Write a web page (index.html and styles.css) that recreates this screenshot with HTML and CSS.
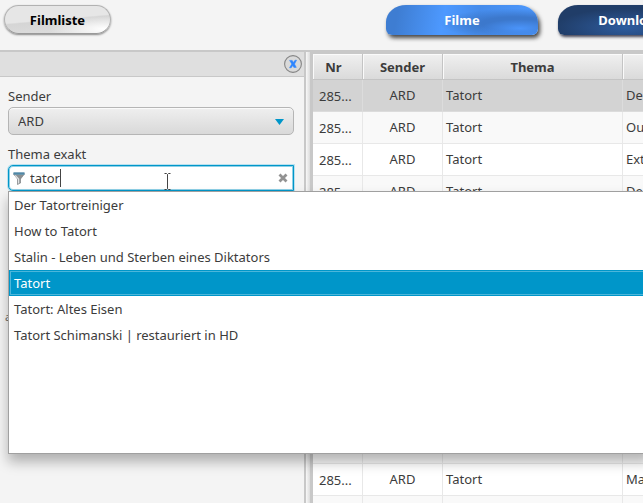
FILE: index.html
```html
<!DOCTYPE html>
<html lang="de">
<head>
<meta charset="utf-8">
<title>Filmliste</title>
<link rel="stylesheet" href="styles.css">
</head>
<body>
<div class="app">
  <header class="toolbar">
    <button class="list-button" type="button">Filmliste</button>
    <nav class="tabs">
      <button class="tab tab-active" type="button">Filme</button>
      <button class="tab tab-dark" type="button">Downloads</button>
    </nav>
  </header>
  <main class="workspace">
    <aside class="sidebar">
      <div class="sidebar-bar">
        <button class="close" type="button" aria-label="Filter schließen">
          <svg width="18" height="18" viewBox="0 0 18 18" aria-hidden="true">
            <circle cx="9" cy="9" r="8.4" fill="#dadada" stroke="#858585" stroke-width="1.1"/>
            <path d="M5.6 5.4H8.2L9.3 7.6L11 5.2H12.6L10.5 9L12.3 12.4H9.9L8.8 10.4L7.2 12.8H5.5L7.8 9Z" fill="#2d85ff" stroke="#2d85ff" stroke-width=".5"/>
          </svg>
        </button>
      </div>
      <form class="filters">
        <label for="sender">Sender</label>
        <div class="select-box">
          <select id="sender"><option>ARD</option></select>
          <svg class="arrow" width="9" height="6" viewBox="0 0 9 6" aria-hidden="true"><path d="M0 0H9L4.5 6Z" fill="#0096c9"/></svg>
        </div>
        <label for="thema">Thema exakt</label>
        <div class="search-box">
          <input id="thema" type="text" value="tator" autocomplete="off">
          <svg class="funnel" width="12" height="13" viewBox="0 0 12 13" aria-hidden="true">
            <path d="M.5 2L4.5 7V12.5L7.5 11V7L11.5 2Z" fill="#8b8f91" stroke="#74787b" stroke-width=".6"/>
            <path d="M2.2 3.4L5.6 7V11.4" fill="none" stroke="#dfe1e2" stroke-width="1.3"/>
            <path d="M.3 .5H11.7V2L10.8 3H1.2L.3 2Z" fill="#6a95ab"/>
            <path d="M.8 1.1H11.2" stroke="#3f7fa3"/>
          </svg>
          <svg class="caret" width="1" height="18" viewBox="0 0 1 18" aria-hidden="true"><path d="M.5 0V18" stroke="#444"/></svg>
          <svg class="pointer" width="9" height="20" viewBox="0 0 9 20" aria-hidden="true">
            <path d="M1.5 1.5H3.5L4.5 2.5L5.5 1.5H7.5M4.5 2.5V16.5M1.5 17.5H3.5L4.5 16.5L5.5 17.5H7.5" fill="none" stroke="#444"/>
          </svg>
          <button class="clear" type="button" aria-label="Löschen">
            <svg width="10" height="10" viewBox="0 0 10 10" aria-hidden="true"><path d="M1.5 1.5L8.5 8.5M8.5 1.5L1.5 8.5" stroke="#929292" stroke-width="2.8"/></svg>
          </button>
          <ul class="suggestions">
            <li>Der Tatortreiniger</li>
            <li>How to Tatort</li>
            <li>Stalin - Leben und Sterben eines Diktators</li>
            <li class="chosen">Tatort</li>
            <li>Tatort: Altes Eisen</li>
            <li>Tatort Schimanski | restauriert in HD</li>
          </ul>
        </div>
        <span class="range">a</span>
      </form>
    </aside>
    <div class="divider"></div>
    <section class="results">
      <table>
        <colgroup><col class="col-nr"><col class="col-sender"><col class="col-thema"><col></colgroup>
        <thead><tr><th>Nr</th><th>Sender</th><th>Thema</th><th></th></tr></thead>
        <tbody>
          <tr class="selected"><td>285...</td><td>ARD</td><td>Tatort</td><td>De</td></tr>
          <tr><td>285...</td><td>ARD</td><td>Tatort</td><td>Ou</td></tr>
          <tr><td>285...</td><td>ARD</td><td>Tatort</td><td>Ext</td></tr>
          <tr><td>285...</td><td>ARD</td><td>Tatort</td><td>De</td></tr>
          <tr><td></td><td></td><td></td><td></td></tr>
          <tr><td></td><td></td><td></td><td></td></tr>
          <tr><td></td><td></td><td></td><td></td></tr>
          <tr><td></td><td></td><td></td><td></td></tr>
          <tr><td></td><td></td><td></td><td></td></tr>
          <tr><td></td><td></td><td></td><td></td></tr>
          <tr><td></td><td></td><td></td><td></td></tr>
          <tr><td></td><td></td><td></td><td></td></tr>
          <tr><td>285...</td><td>ARD</td><td>Tatort</td><td>Ma</td></tr>
          <tr><td></td><td></td><td></td><td></td></tr>
        </tbody>
      </table>
    </section>
  </main>
</div>
</body>
</html>
```
FILE: styles.css
```css
* { box-sizing: border-box; }

body {
  margin: 0;
  background: #f4f4f4;
  color: #3c3c3c;
  font: 13px/20px "Noto Sans", sans-serif;
}

button, select, input { font: inherit; color: inherit; }
button { padding: 0; border: 0; background: none; }
svg { display: block; }

.app {
  display: flex;
  flex-direction: column;
  height: 100vh;
  overflow: hidden;
}

.toolbar {
  display: flex;
  align-items: flex-start;
  justify-content: space-between;
  flex: none;
  padding: 5px 0 15px 4px;
  border-bottom: 2px solid #c8c8c8;
}

.list-button {
  flex: none;
  width: 107px;
  height: 29px;
  border: 1px solid #b2b2b2;
  border-bottom-color: #999;
  border-radius: 15px;
  background:
    radial-gradient(ellipse at 95% 85%, #fff, transparent 40%),
    linear-gradient(175deg, #e6e6e6 48%, #d5d5d5 52%, #dedede);
  box-shadow: 0 1px 2px #888;
  color: #000;
  font-weight: 700;
}

.tabs {
  display: flex;
  flex: none;
  gap: 20px;
  width: 257px;
}

.tab {
  flex: none;
  width: 152px;
  height: 30px;
  border-radius: 20px 20px 6px 6px / 17px 17px 6px 6px;
  color: #fff;
  font-weight: 700;
}

.tab-active {
  background:
    radial-gradient(ellipse 26% 30% at 88% 78%, #4a94fa, transparent),
    radial-gradient(ellipse 50% 50% at 85% 62%, #3c78cc 45%, transparent),
    linear-gradient(100deg, #3e7dd2 8%, #4d99ff 38%, #468ceb 60%, #4d99ff);
  box-shadow: 2px 3px 4px #444;
}

.tab-dark {
  background: radial-gradient(ellipse at 45% 75%, #2e5c9e, #203d68 60%);
  box-shadow: 1px 2px 3px #445;
}

.workspace {
  display: flex;
  flex: 1;
  min-height: 0;
}

.sidebar { flex: none; width: 304px; }

.sidebar-bar {
  display: flex;
  align-items: center;
  justify-content: flex-end;
  height: 25px;
  padding-right: 2px;
  border-bottom: 1px solid #c8c8c8;
  background: #dfdfdf;
}

.filters {
  display: flex;
  flex-direction: column;
  padding: 9px 10px 0 8px;
}

label { margin-bottom: 1px; }

.select-box, .search-box { position: relative; }
.select-box { margin-bottom: 9px; }

select {
  display: block;
  width: 100%;
  height: 28px;
  padding: 0 9px;
  border: 1px solid #b5b5b5;
  border-radius: 5px;
  background: linear-gradient(#efefef, #d9d9d9);
  box-shadow: inset 0 1px #fafafa;
  appearance: none;
}

.arrow { position: absolute; right: 10px; top: 12px; }

input {
  display: block;
  width: 100%;
  height: 26px;
  padding: 0 24px 0 21px;
  border: 1px solid #0096c9;
  border-radius: 5px 0 0 5px;
  background: #fff;
  box-shadow: 0 0 0 1px #b9e1ef, inset 0 0 0 1px #8ed0e6;
}

.funnel { position: absolute; left: 5px; top: 7px; }
.caret { position: absolute; left: 52px; top: 4px; }
.pointer { position: absolute; z-index: 3; left: 155px; top: 7px; }
.clear { position: absolute; right: 6px; top: 8px; }

.suggestions {
  position: absolute;
  z-index: 2;
  top: 26px;
  left: 0;
  width: 100vw;
  height: 263px;
  margin: 0;
  padding: 0;
  border: 1px solid #a0a0a0;
  background: #fff;
  box-shadow: 0 8px 12px rgba(0, 0, 0, .28);
  list-style: none;
}

.suggestions li {
  height: 26px;
  padding: 0 5px;
  line-height: 26px;
  white-space: nowrap;
}

.suggestions .chosen {
  border: 1px solid #0096c9;
  outline: 1px solid #4cb6da;
  outline-offset: -2px;
  padding: 0 4px;
  background: #0096c9;
  color: #fff;
  line-height: 24px;
}

.range {
  width: 6px;
  margin: 116px 0 0 -3px;
  color: #666;
  font-size: 11px;
}

.divider {
  flex: none;
  width: 9px;
  border-left: 2px solid #c8c8c8;
  border-right: 3px solid #c8c8c8;
  background: linear-gradient(90deg, #f8f8f8, #dcdcdc);
}

.results {
  flex: 1;
  min-width: 0;
  overflow: hidden;
  border-top: 2px solid #c8c8c8;
}

table {
  width: 100%;
  table-layout: fixed;
  border-spacing: 0;
}

.col-nr { width: 50px; }
.col-sender { width: 80px; }
.col-thema { width: 180px; }

th, td {
  overflow: hidden;
  padding: 0 3px;
  white-space: nowrap;
}

th {
  height: 26px;
  border-right: 1px solid #c4c4c4;
  border-bottom: 1px solid #c4c4c4;
  background: linear-gradient(#f0f0f0, #dadada);
  box-shadow: inset 1px 1px #fafafa;
}

th:first-child { padding-right: 11px; }

td {
  height: 32px;
  padding-bottom: 2px;
  border-right: 1px solid #e8e8e8;
  border-bottom: 1px solid #e8e8e8;
  background: #fff;
}

tr:nth-child(even) td { background: #f9f9f9; }
.selected td { background: #d3d3d3; border-color: #dcdcdc; }
td:first-child { padding-left: 6px; padding-bottom: 0; }
td:nth-child(2) { text-align: center; }
th:last-child, td:last-child { border-right: 0; padding-right: 0; }
```
